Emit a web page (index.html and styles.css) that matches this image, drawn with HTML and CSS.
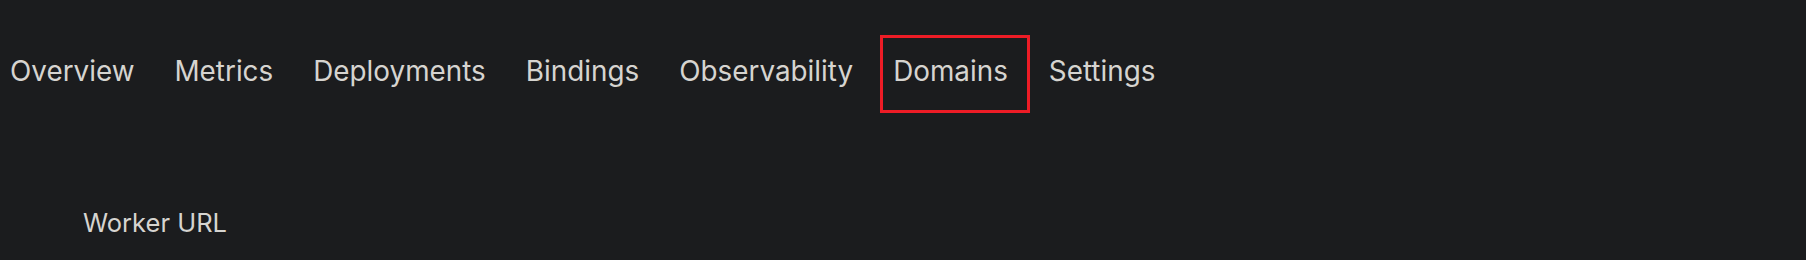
FILE: index.html
```html
<!DOCTYPE html>
<html lang="en">
<head>
    <meta charset="UTF-8">
    <title>Worker - Domains</title>
    <link rel="stylesheet" href="styles.css">
</head>
<body>
    <nav class="tabs">
        <a class="tab">Overview</a>
        <a class="tab">Metrics</a>
        <a class="tab">Deployments</a>
        <a class="tab">Bindings</a>
        <a class="tab">Observability</a>
        <a class="tab active">Domains</a>
        <a class="tab">Settings</a>
    </nav>

    <section class="panel">
        <h3 class="panel-title">Worker URL</h3>
    </section>
</body>
</html>
```

FILE: styles.css
```css
:root {
    --background: #1b1c1e;
    --text: #d6d4d0;
    --highlight: #ed1c26;
}

* {
    margin: 0;
    padding: 0;
    box-sizing: border-box;
}

body {
    font-family: Inter, "Noto Sans", sans-serif;
    background: var(--background);
    color: var(--text);
    min-height: 100vh;
}

.tabs {
    display: flex;
    align-items: center;
    padding-top: 35px;
}

.tab {
    display: flex;
    align-items: center;
    height: 78px;
    padding: 0 10px 5px 10px;
    margin-right: 20px;
    font-size: 27.85px;
    line-height: 1;
    cursor: pointer;
}

.tab.active {
    outline: 3px solid var(--highlight);
    outline-offset: -3px;
    padding: 0 22px 5px 13px;
    margin-left: -3px;
    margin-right: 9px;
}

.panel {
    padding: 94px 0 0 83px;
}

.panel-title {
    font-size: 25.5px;
    font-weight: 400;
}
```
